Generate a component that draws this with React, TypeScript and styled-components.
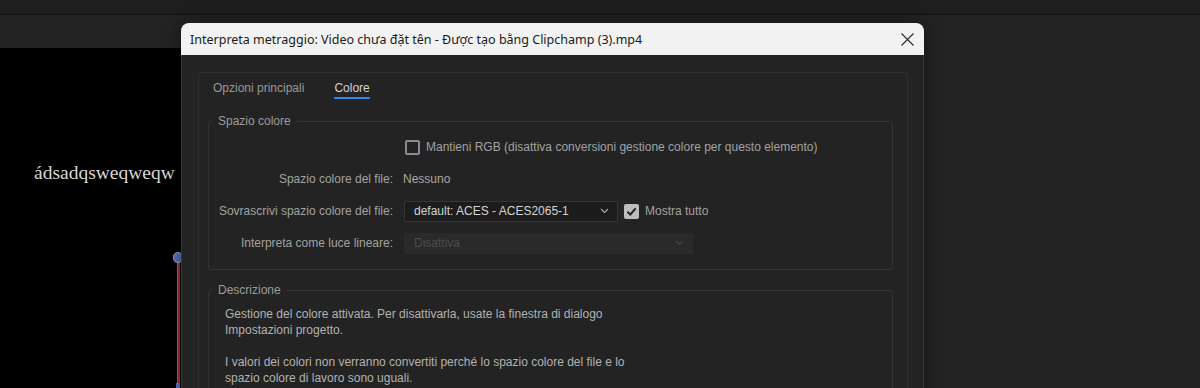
import styled, { createGlobalStyle } from 'styled-components';

const GlobalStyle = createGlobalStyle`
    html, body {
        margin: 0;
        padding: 0;
        background: #232323;
        overflow: hidden;
    }
    * {
        box-sizing: border-box;
    }
`;

const UI_FONT = `"Liberation Sans", Arial, sans-serif`;

const Chevron = ({ color }: { color: string }) => (
    <svg width="9" height="6" viewBox="0 0 9 6">
        <path d="M1 1 L4.5 4.5 L8 1" fill="none" stroke={color} strokeWidth="1.2" />
    </svg>
);

interface ICheckBoxProps {
    checked?: boolean;
}

const CheckBox = ({ checked }: ICheckBoxProps) => (
    <Box $checked={checked}>
        {checked && (
            <svg width="11" height="11" viewBox="0 0 11 11">
                <path d="M1.5 5.8 L4.3 8.6 L9.6 2.4" fill="none" stroke="#1e1e1e" strokeWidth="2" />
            </svg>
        )}
    </Box>
);

const App = () => {
    return (
        <>
            <GlobalStyle />
            <Screen>
                <TopStrip />
                <Workspace>
                    <MonitorColumn>
                        <MonitorHeader />
                        <Monitor>
                            <Caption>ádsadqsweqweqw</Caption>
                            <Playhead>
                                <PlayheadKnob />
                                <PlayheadLine />
                                <PlayheadFoot />
                            </Playhead>
                        </Monitor>
                    </MonitorColumn>
                    <RightArea />
                </Workspace>

                <Dialog>
                    <TitleBar>
                        <Title>Interpreta metraggio: Video chưa đặt tên - Được tạo bằng Clipchamp (3).mp4</Title>
                        <CloseButton>
                            <svg width="13" height="13" viewBox="0 0 13 13">
                                <path d="M0.5 0.5 L12.5 12.5 M12.5 0.5 L0.5 12.5" stroke="#2a2a2a" strokeWidth="1.1" />
                            </svg>
                        </CloseButton>
                    </TitleBar>
                    <DialogBody>
                        <TabPanel>
                            <TabBar>
                                <Tab>Opzioni principali</Tab>
                                <Tab $active>Colore</Tab>
                            </TabBar>

                            <Group>
                                <Legend>Spazio colore</Legend>
                                <FormGrid>
                                    <Label />
                                    <Control>
                                        <CheckWrap $offset={2}>
                                            <CheckBox />
                                            <CheckText>Mantieni RGB (disattiva conversioni gestione colore per questo elemento)</CheckText>
                                        </CheckWrap>
                                    </Control>

                                    <Label>Spazio colore del file:</Label>
                                    <Control>
                                        <Value>Nessuno</Value>
                                    </Control>

                                    <Label>Sovrascrivi spazio colore del file:</Label>
                                    <Control>
                                        <Select $width={214}>
                                            <span>default: ACES - ACES2065-1</span>
                                            <Chevron color="#a8a8a8" />
                                        </Select>
                                        <CheckWrap $offset={6}>
                                            <CheckBox checked />
                                            <CheckText>Mostra tutto</CheckText>
                                        </CheckWrap>
                                    </Control>

                                    <Label>Interpreta come luce lineare:</Label>
                                    <Control>
                                        <Select $width={289} $disabled>
                                            <span>Disattiva</span>
                                            <Chevron color="#444444" />
                                        </Select>
                                    </Control>
                                </FormGrid>
                            </Group>

                            <DescGroup>
                                <Legend>Descrizione</Legend>
                                <DescText>
                                    <p>Gestione del colore attivata. Per disattivarla, usate la finestra di dialogo<br />Impostazioni progetto.</p>
                                    <p>I valori dei colori non verranno convertiti perché lo spazio colore del file e lo<br />spazio colore di lavoro sono uguali.</p>
                                </DescText>
                            </DescGroup>
                        </TabPanel>
                    </DialogBody>
                </Dialog>
            </Screen>
        </>
    );
};

const Screen = styled.div`
    position: relative;
    width: 1200px;
    height: 388px;
    display: flex;
    flex-direction: column;
    background: #232323;
    overflow: hidden;
`;
const TopStrip = styled.div`
    height: 15px;
    flex-shrink: 0;
    background: #1e1e1e;
    border-bottom: 1px solid #111111;
`;
const Workspace = styled.div`
    flex: 1;
    display: flex;
`;
const MonitorColumn = styled.div`
    width: 182px;
    display: flex;
    flex-direction: column;
`;
const MonitorHeader = styled.div`
    height: 33px;
    background: #232323;
`;
const Monitor = styled.div`
    position: relative;
    flex: 1;
    background: #000000;
`;
const Caption = styled.div`
    padding: 114px 0 0 34px;
    font-family: "Liberation Serif", "Times New Roman", serif;
    font-size: 19.5px;
    color: #d6d6d6;
    white-space: nowrap;
`;
const Playhead = styled.div`
    position: absolute;
    left: 172px;
    top: 204px;
    bottom: 0;
    width: 12px;
    display: flex;
    flex-direction: column;
    align-items: center;
`;
const PlayheadKnob = styled.div`
    width: 10px;
    height: 11px;
    border-radius: 50%;
    background: #5a6fc0;
    border: 1px solid #9aa8c8;
`;
const PlayheadLine = styled.div`
    flex: 1;
    width: 3px;
    margin-left: 1px;
    background: linear-gradient(to right, #5a73d0 0 1px, #a83040 1px 3px);
`;
const PlayheadFoot = styled.div`
    width: 4px;
    height: 5px;
    background: #5a73d0;
`;
const RightArea = styled.div`
    flex: 1;
    background: #232323;
`;

const Dialog = styled.div`
    position: absolute;
    left: 181px;
    top: 23px;
    width: 743px;
    height: 420px;
    display: flex;
    flex-direction: column;
    border-radius: 8px 8px 0 0;
    box-shadow: 0 0 18px rgba(0, 0, 0, 0.45);
`;
const TitleBar = styled.div`
    height: 32px;
    flex-shrink: 0;
    display: flex;
    align-items: center;
    justify-content: space-between;
    padding: 0 10px 0 9px;
    background: #f2f2f2;
    border-radius: 8px 8px 0 0;
`;
const Title = styled.div`
    font-family: "Noto Sans", "Open Sans", sans-serif;
    font-size: 12.5px;
    color: #1a1a1a;
    white-space: nowrap;
`;
const CloseButton = styled.div`
    width: 13px;
    height: 13px;
    display: flex;
`;
const DialogBody = styled.div`
    flex: 1;
    min-height: 0;
    padding: 17px 15px 0 16px;
    background: #232323;
    border: 1px solid #363636;
    border-top: none;
`;
const TabPanel = styled.div`
    height: 100%;
    padding: 0 14px 0 9px;
    border: 1px solid #2e2e2e;
    border-radius: 2px;
`;
const TabBar = styled.div`
    display: flex;
    gap: 30px;
    padding: 7px 0 0 5px;
    height: 26px;
    margin-bottom: 14px;
`;
const Tab = styled.div<{ $active?: boolean }>`
    font-family: ${UI_FONT};
    font-size: 12px;
    line-height: 16px;
    height: 19px;
    color: ${({ $active }) => ($active ? '#d2d2d2' : '#999999')};
    border-bottom: 2px solid ${({ $active }) => ($active ? '#2d8ceb' : 'transparent')};
`;
const Group = styled.fieldset`
    margin: 0;
    padding: 2px 0 10px 0;
    border: 1px solid #333333;
    border-radius: 3px;
    min-width: 0;
`;
const DescGroup = styled(Group)`
    margin-top: 12px;
    padding: 8px 0 0 0;
    height: 200px;
`;
const Legend = styled.legend`
    margin-left: 3px;
    padding: 0 6px;
    font-family: ${UI_FONT};
    font-size: 12px;
    line-height: 16px;
    color: #9c9c9c;
`;
const FormGrid = styled.div`
    display: grid;
    grid-template-columns: 184px 1fr;
    grid-auto-rows: 32px;
    column-gap: 10px;
`;
const Label = styled.div`
    display: flex;
    align-items: center;
    justify-content: flex-end;
    font-family: ${UI_FONT};
    font-size: 12px;
    color: #a2a2a2;
    white-space: nowrap;
`;
const Control = styled.div`
    display: flex;
    align-items: center;
`;
const Value = styled.span`
    font-family: ${UI_FONT};
    font-size: 12px;
    color: #a8a8a8;
`;
const CheckWrap = styled.div<{ $offset: number }>`
    display: flex;
    align-items: center;
    gap: 6px;
    margin-left: ${({ $offset }) => $offset}px;
`;
const Box = styled.div<{ $checked?: boolean }>`
    width: 15px;
    height: 15px;
    display: flex;
    align-items: center;
    justify-content: center;
    border-radius: 2px;
    border: ${({ $checked }) => ($checked ? 'none' : '2px solid #8c8c8c')};
    background: ${({ $checked }) => ($checked ? '#bdbdbd' : 'transparent')};
`;
const CheckText = styled.span`
    font-family: ${UI_FONT};
    font-size: 12px;
    color: #a2a2a2;
    white-space: nowrap;
`;
const Select = styled.div<{ $width: number; $disabled?: boolean }>`
    width: ${({ $width }) => $width}px;
    height: 21px;
    margin-left: 1px;
    display: flex;
    align-items: center;
    justify-content: space-between;
    padding: 0 8px 0 9px;
    border-radius: 2px;
    font-family: ${UI_FONT};
    font-size: 12px;
    color: ${({ $disabled }) => ($disabled ? '#4c4c4c' : '#d4d4d4')};
    background: ${({ $disabled }) => ($disabled ? '#2a2a2a' : '#1c1c1c')};
    border: 1px solid ${({ $disabled }) => ($disabled ? '#2a2a2a' : '#363636')};
`;
const DescText = styled.div`
    padding: 0 16px;
    font-family: ${UI_FONT};
    font-size: 12px;
    line-height: 16px;
    color: #b2b2b2;
    p {
        margin: 0 0 16px 0;
    }
`;

export default App;
